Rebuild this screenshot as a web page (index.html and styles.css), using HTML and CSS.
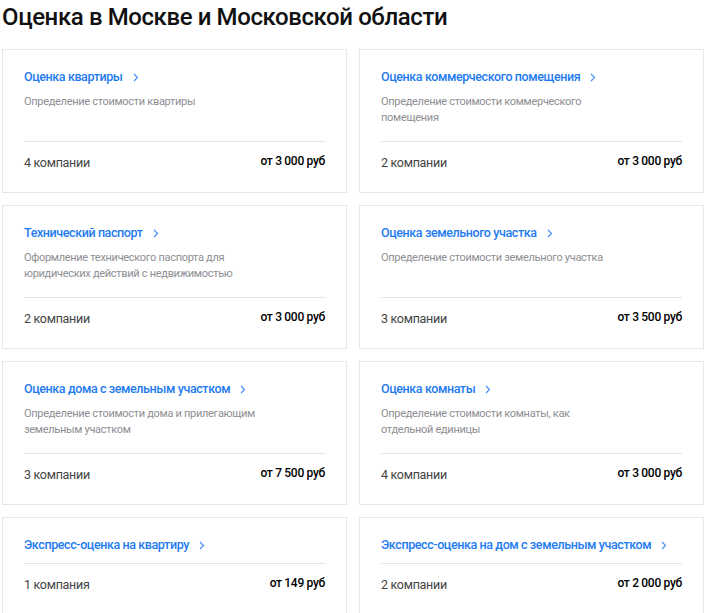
FILE: index.html
```html
<!DOCTYPE html>
<html lang="ru">
<head>
  <meta charset="UTF-8" />
  <meta name="viewport" content="width=device-width, initial-scale=1.0"/>
  <title>Оценка в Москве и Московской области</title>
  <link rel="stylesheet" href="styles.css">
</head>
<body>

  <div class="page">
    <h1 class="page-title">Оценка в Москве и Московской области</h1>

    <div class="services">
      <div class="card">
        <a class="card-title" href="#">Оценка квартиры <svg class="chev" width="6" height="9" viewBox="0 0 6 9"><path d="M1 1l3.5 3.5L1 8" /></svg></a>
        <div class="card-desc">Определение стоимости квартиры</div>
        <div class="card-footer">
          <span class="companies">4 компании</span>
          <span class="price">от 3 000 руб</span>
        </div>
      </div>

      <div class="card">
        <a class="card-title" href="#">Оценка коммерческого помещения <svg class="chev" width="6" height="9" viewBox="0 0 6 9"><path d="M1 1l3.5 3.5L1 8" /></svg></a>
        <div class="card-desc">Определение стоимости коммерческого<br>помещения</div>
        <div class="card-footer">
          <span class="companies">2 компании</span>
          <span class="price">от 3 000 руб</span>
        </div>
      </div>

      <div class="card">
        <a class="card-title" href="#">Технический паспорт <svg class="chev" width="6" height="9" viewBox="0 0 6 9"><path d="M1 1l3.5 3.5L1 8" /></svg></a>
        <div class="card-desc">Оформление технического паспорта для<br>юридических действий с недвижимостью</div>
        <div class="card-footer">
          <span class="companies">2 компании</span>
          <span class="price">от 3 000 руб</span>
        </div>
      </div>

      <div class="card">
        <a class="card-title" href="#">Оценка земельного участка <svg class="chev" width="6" height="9" viewBox="0 0 6 9"><path d="M1 1l3.5 3.5L1 8" /></svg></a>
        <div class="card-desc">Определение стоимости земельного участка</div>
        <div class="card-footer">
          <span class="companies">3 компании</span>
          <span class="price">от 3 500 руб</span>
        </div>
      </div>

      <div class="card">
        <a class="card-title" href="#">Оценка дома с земельным участком <svg class="chev" width="6" height="9" viewBox="0 0 6 9"><path d="M1 1l3.5 3.5L1 8" /></svg></a>
        <div class="card-desc">Определение стоимости дома и прилегающим<br>земельным участком</div>
        <div class="card-footer">
          <span class="companies">3 компании</span>
          <span class="price">от 7 500 руб</span>
        </div>
      </div>

      <div class="card">
        <a class="card-title" href="#">Оценка комнаты <svg class="chev" width="6" height="9" viewBox="0 0 6 9"><path d="M1 1l3.5 3.5L1 8" /></svg></a>
        <div class="card-desc">Определение стоимости комнаты, как<br>отдельной единицы</div>
        <div class="card-footer">
          <span class="companies">4 компании</span>
          <span class="price">от 3 000 руб</span>
        </div>
      </div>

      <div class="card">
        <a class="card-title" href="#">Экспресс-оценка на квартиру <svg class="chev" width="6" height="9" viewBox="0 0 6 9"><path d="M1 1l3.5 3.5L1 8" /></svg></a>
        <div class="card-footer">
          <span class="companies">1 компания</span>
          <span class="price">от 149 руб</span>
        </div>
      </div>

      <div class="card">
        <a class="card-title" href="#">Экспресс-оценка на дом с земельным участком <svg class="chev" width="6" height="9" viewBox="0 0 6 9"><path d="M1 1l3.5 3.5L1 8" /></svg></a>
        <div class="card-footer">
          <span class="companies">2 компании</span>
          <span class="price">от 2 000 руб</span>
        </div>
      </div>
    </div>
  </div>

</body>
</html>
```

FILE: styles.css
```css
body {
  margin: 0;
  font-family: Roboto, "Noto Sans", sans-serif;
  background: #fff;
  color: #222;
}
.page {
  padding: 0 3px 0 2px;
}
.page-title {
  margin: 0;
  padding-top: 3px;
  height: 46px;
  font-size: 24px;
  line-height: 28px;
  font-weight: 500;
  color: #111;
  letter-spacing: -0.4px;
}
.services {
  display: grid;
  grid-template-columns: 1fr 1fr;
  gap: 12px;
}
.card {
  border: 1px solid #e6e6ee;
  padding: 19px 21px 20px;
}
.card-title {
  display: flex;
  width: fit-content;
  align-items: center;
  gap: 10px;
  font-size: 12.5px;
  line-height: 16px;
  font-weight: 500;
  color: #1f7bf0;
  text-decoration: none;
  letter-spacing: -0.4px;
}
.chev {
  fill: none;
  stroke: #4a8ef0;
  stroke-width: 1.2;
}
.card-desc {
  margin-top: 9px;
  min-height: 32px;
  margin-bottom: 15px;
  font-size: 11px;
  line-height: 16px;
  color: #8e8e93;
  letter-spacing: -0.3px;
}
.card-footer {
  display: flex;
  justify-content: space-between;
  align-items: flex-start;
  margin-top: 10px;
  padding-top: 12px;
  border-top: 1px solid #e4e4ec;
}
.companies {
  font-size: 12.5px;
  line-height: 18px;
  color: #444;
  letter-spacing: -0.3px;
}
.price {
  font-size: 12px;
  line-height: 14px;
  font-weight: 500;
  color: #000;
  letter-spacing: -0.3px;
}
```
